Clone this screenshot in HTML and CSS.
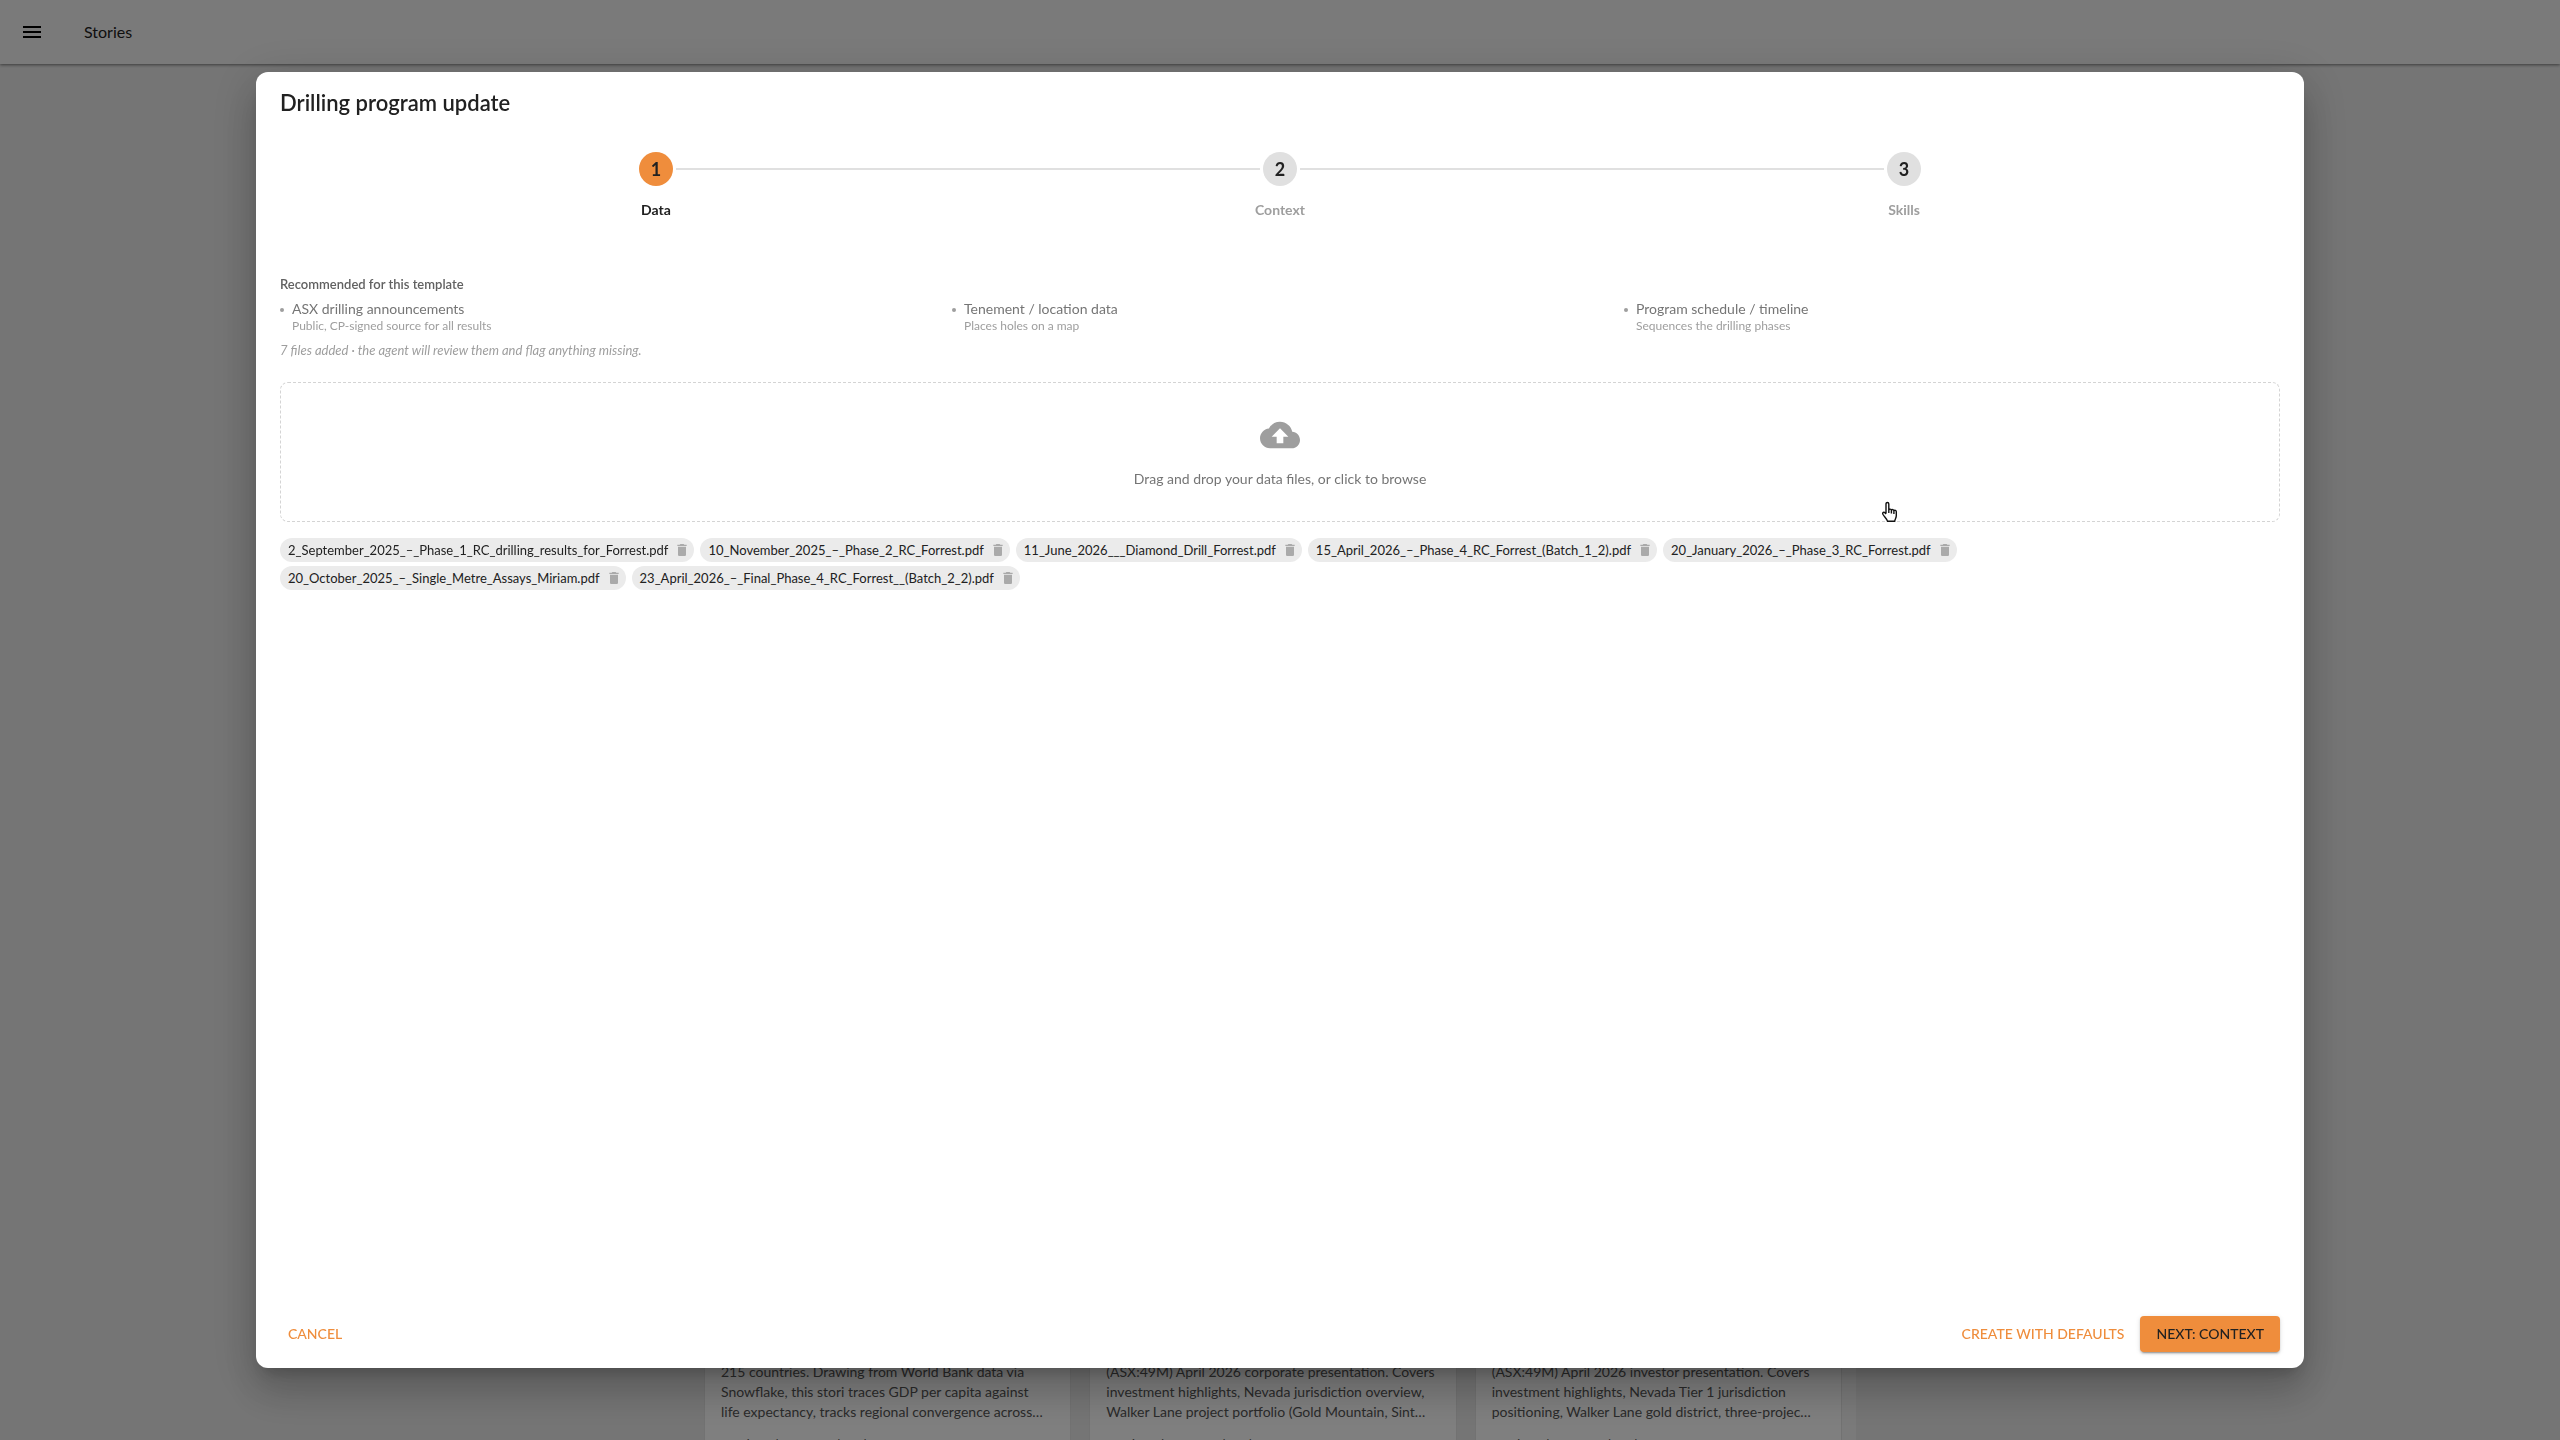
FILE: index.html
```
<!DOCTYPE html>
<html lang="en">
<head>
<meta charset="utf-8">
<meta name="viewport" content="width=device-width, initial-scale=1.0">
<title>Stories</title>
<link rel="stylesheet" href="styles.css">
</head>
<body>
<svg class="sprite" aria-hidden="true">
  <symbol id="trash" viewBox="0 0 24 24">
    <path d="M6 19c0 1.100.9 2 2 2h8c1.100 0 2-.9 2-2V7H6v12zM19 4h-3.500l-1-1h-5l-1 1H5v2h14V4z"/>
  </symbol>
</svg>
<div class="page">
  <header class="topbar">
    <button class="menu-button" type="button" aria-label="Menu">
      <svg viewBox="0 0 24 24" width="24" height="24"><path d="M3 18h18v-2H3v2zm0-5h18v-2H3v2zm0-7v2h18V6H3z"/></svg>
    </button>
    <span class="topbar-title">Stories</span>
  </header>
  <main class="stories">
    <div class="story-list">
      <article class="story-card">
        <p>215 countries. Drawing from World Bank data via<br>Snowflake, this stori traces GDP per capita against<br>life expectancy, tracks regional convergence across…</p>
        <p class="story-meta"><span>Stori graph</span><span>27 d read</span></p>
      </article>
      <article class="story-card">
        <p>(ASX:49M) April 2026 corporate presentation. Covers<br>investment highlights, Nevada jurisdiction overview,<br>Walker Lane project portfolio (Gold Mountain, Sint…</p>
        <p class="story-meta"><span>Stori graph</span><span>27 d read</span></p>
      </article>
      <article class="story-card">
        <p>(ASX:49M) April 2026 investor presentation. Covers<br>investment highlights, Nevada Tier 1 jurisdiction<br>positioning, Walker Lane gold district, three-projec…</p>
        <p class="story-meta"><span>Stori graph</span><span>27 d read</span></p>
      </article>
    </div>
  </main>
</div>
<div class="backdrop">
  <div class="dialog" role="dialog" aria-labelledby="dialogTitle">
    <h2 id="dialogTitle">Drilling program update</h2>
    <ol class="stepper">
      <li class="step active"><span class="step-icon">1</span><span class="step-label">Data</span></li>
      <li class="step"><span class="step-icon">2</span><span class="step-label">Context</span></li>
      <li class="step"><span class="step-icon">3</span><span class="step-label">Skills</span></li>
    </ol>
    <section class="recommended">
      <h3>Recommended for this template</h3>
      <ul>
        <li><span class="rec-name">ASX drilling announcements</span><span class="rec-hint">Public, CP-signed source for all results</span></li>
        <li><span class="rec-name">Tenement / location data</span><span class="rec-hint">Places holes on a map</span></li>
        <li><span class="rec-name">Program schedule / timeline</span><span class="rec-hint">Sequences the drilling phases</span></li>
      </ul>
      <p class="rec-status">7 files added · the agent will review them and flag anything missing.</p>
    </section>
    <button class="dropzone" type="button">
      <svg viewBox="0 0 24 24" width="40" height="40"><path d="M19.350 10.040C18.670 6.590 15.640 4 12 4 9.110 4 6.600 5.640 5.350 8.040 2.340 8.360 0 10.910 0 14c0 3.310 2.690 6 6 6h13c2.760 0 5-2.240 5-5 0-2.640-2.050-4.780-4.650-4.960zM14 13v4h-4v-4H7l5-5 5 5h-3z"/></svg>
      <span>Drag and drop your data files, or click to browse</span>
      <svg class="pointer" viewBox="0 0 18 22" width="18" height="22"><path d="M5 12.500V3c0-2 2.800-2 2.800 0v6c.3-1.300 2.500-1.200 2.600.2.500-1 2.300-.8 2.500.5.800-.8 2.400-.4 2.400 1.100v3.700c0 2.500-1.300 3.400-1.600 5.700H6.500c-.6-2.600-3.400-4.500-4.600-7-.8-1.800 1.100-2.500 2.100-1.400l1 1.200M7.800 9v3M10.400 9.500v3M12.900 10.200V13"/></svg>
    </button>
    <ul class="files">
      <li>2_September_2025_–_Phase_1_RC_drilling_results_for_Forrest.pdf<button type="button" aria-label="Remove"><svg><use href="#trash"/></svg></button></li>
      <li>10_November_2025_–_Phase_2_RC_Forrest.pdf<button type="button" aria-label="Remove"><svg><use href="#trash"/></svg></button></li>
      <li>11_June_2026___Diamond_Drill_Forrest.pdf<button type="button" aria-label="Remove"><svg><use href="#trash"/></svg></button></li>
      <li>15_April_2026_–_Phase_4_RC_Forrest_(Batch_1_2).pdf<button type="button" aria-label="Remove"><svg><use href="#trash"/></svg></button></li>
      <li>20_January_2026_–_Phase_3_RC_Forrest.pdf<button type="button" aria-label="Remove"><svg><use href="#trash"/></svg></button></li>
      <li>20_October_2025_–_Single_Metre_Assays_Miriam.pdf<button type="button" aria-label="Remove"><svg><use href="#trash"/></svg></button></li>
      <li>23_April_2026_–_Final_Phase_4_RC_Forrest__(Batch_2_2).pdf<button type="button" aria-label="Remove"><svg><use href="#trash"/></svg></button></li>
    </ul>
    <footer class="actions">
      <button class="text-button" type="button">CANCEL</button>
      <button class="text-button push" type="button">CREATE WITH DEFAULTS</button>
      <button class="next-button" type="button">NEXT: CONTEXT</button>
    </footer>
  </div>
</div>
</body>
</html>
```
FILE: styles.css
```
* {
  box-sizing: border-box;
}
body {
  margin: 0;
  font-family: Lato, "Liberation Sans", sans-serif;
  font-size: 14px;
  line-height: 20px;
  color: #212121;
}
h2, h3, p, ul, ol {
  margin: 0;
  padding: 0;
}
ul, ol {
  list-style: none;
}
button {
  font: inherit;
  border: 0;
  padding: 0;
  background: none;
  cursor: pointer;
}
.sprite {
  display: none;
}
.page {
  height: 100vh;
  display: flex;
  flex-direction: column;
  overflow: hidden;
  background: #ebebeb;
}
.topbar {
  display: flex;
  align-items: center;
  gap: 40px;
  height: 64px;
  padding: 0 20px;
  background: #f5f5f5;
  box-shadow: 0 1px 3px rgba(0, 0, 0, 0.5);
}
.menu-button {
  display: flex;
}
.topbar-title {
  font-size: 16px;
}
.stories {
  flex: 1;
  display: flex;
  flex-direction: column;
  justify-content: flex-end;
  align-items: center;
}
.story-list {
  display: grid;
  grid-template-columns: repeat(3, 1fr);
  gap: 18px;
  width: 45%;
  border-right: 14px solid #f5f5f5;
}
.story-card {
  height: 78px;
  padding: 0 16px;
  overflow: hidden;
  white-space: nowrap;
  background: #fff;
  border: solid #e4e4e4;
  border-width: 0 1px;
  color: #555;
}
.story-meta {
  display: flex;
  gap: 34px;
  margin-top: 12px;
  padding-left: 4px;
  font-size: 12px;
}
.backdrop {
  position: fixed;
  inset: 0;
  display: flex;
  align-items: center;
  justify-content: center;
  background: rgba(0, 0, 0, 0.5);
}
.dialog {
  display: flex;
  flex-direction: column;
  width: 80%;
  height: 90%;
  padding: 16px 24px;
  background: #fff;
  border-radius: 12px;
  box-shadow: 0 11px 15px -7px rgba(0, 0, 0, 0.2), 0 24px 38px 3px rgba(0, 0, 0, 0.14), 0 9px 46px 8px rgba(0, 0, 0, 0.12);
}
.dialog h2 {
  font-size: 22px;
  line-height: 30px;
  font-weight: 600;
}
.stepper {
  display: flex;
  margin-top: 34px;
  padding: 0 64px;
}
.step {
  position: relative;
  flex: 1;
  display: flex;
  flex-direction: column;
  align-items: center;
  gap: 14px;
  color: #9e9e9e;
  font-weight: 700;
}
.step + .step::before {
  content: '';
  position: absolute;
  top: 16px;
  left: calc(-50% + 20px);
  right: calc(50% + 20px);
  height: 2px;
  background: #e0e0e0;
}
.step-icon {
  width: 34px;
  height: 34px;
  border-radius: 50%;
  background: #e0e0e0;
  color: #212121;
  font-size: 18px;
  line-height: 34px;
  text-align: center;
}
.step.active {
  color: #212121;
}
.active .step-icon {
  background: #ef8d3c;
}
.recommended {
  margin-top: 54px;
  color: #9e9e9e;
  font-size: 12px;
  line-height: 16px;
}
.recommended h3 {
  font-size: 13px;
  line-height: 20px;
  font-weight: 600;
  color: #616161;
}
.recommended ul {
  display: grid;
  grid-template-columns: repeat(3, 1fr);
  gap: 16px;
  margin-top: 6px;
}
.recommended li {
  display: grid;
  padding-left: 12px;
  position: relative;
}
.recommended li::before {
  content: '';
  position: absolute;
  left: 0;
  top: 8px;
  width: 4px;
  height: 4px;
  border-radius: 50%;
  background: #9e9e9e;
}
.rec-name {
  font-size: 14px;
  line-height: 18px;
  color: #757575;
}
.rec-status {
  margin-top: 8px;
  font-size: 13px;
  font-style: italic;
}
.dropzone {
  position: relative;
  display: flex;
  flex-direction: column;
  align-items: center;
  gap: 14px;
  margin-top: 24px;
  padding: 32px;
  border: 1px dashed #d4d4d4;
  border-radius: 8px;
  color: #757575;
}
.dropzone svg {
  fill: #9e9e9e;
}
.dropzone .pointer {
  position: absolute;
  right: 19%;
  bottom: -2px;
  fill: #fff;
  stroke: #111;
  stroke-width: 1.4;
}
.files {
  display: flex;
  flex-wrap: wrap;
  gap: 4px 6px;
  margin-top: 16px;
  padding-right: 300px;
}
.files li {
  display: flex;
  align-items: center;
  gap: 6px;
  height: 24px;
  padding: 0 4px 0 8px;
  border-radius: 12px;
  background: #ebebeb;
  font-size: 13px;
}
.files button {
  display: flex;
}
.files svg {
  width: 16px;
  height: 16px;
  fill: #aaa;
}
.actions {
  display: flex;
  align-items: center;
  gap: 8px;
  margin-top: auto;
}
.actions button {
  height: 36px;
  padding: 0 8px;
  border-radius: 4px;
  font-weight: 500;
}
.actions .text-button {
  color: #ef8d3c;
}
.actions .push {
  margin-left: auto;
}
.actions .next-button {
  padding: 0 16px;
  background: #ef8d3c;
  color: #212121;
  box-shadow: 0 3px 1px -2px rgba(0, 0, 0, 0.2), 0 2px 2px rgba(0, 0, 0, 0.14), 0 1px 5px rgba(0, 0, 0, 0.12);
}
```
